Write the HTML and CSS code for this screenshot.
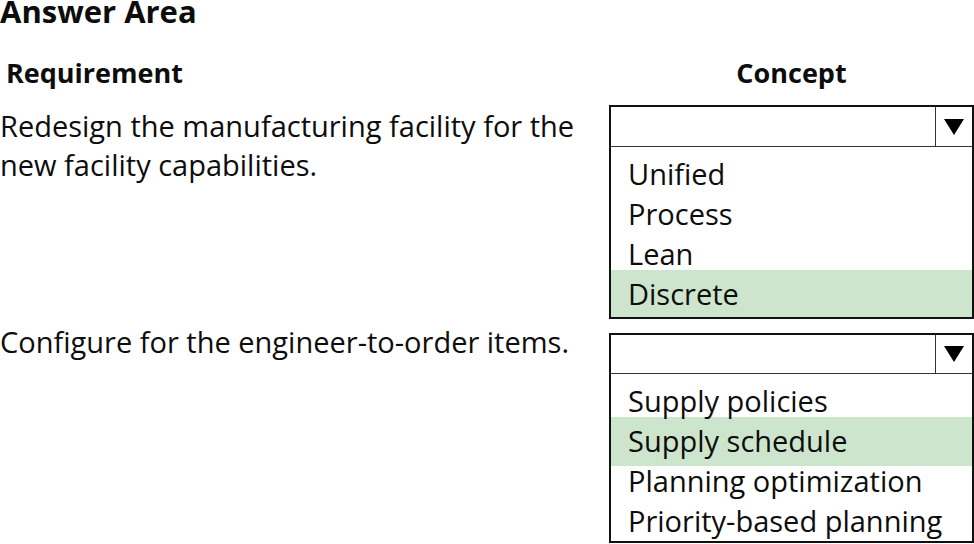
FILE: index.html
```html
<!DOCTYPE html>
<html lang="en">
<head>
<meta charset="utf-8">
<title>Answer Area</title>
<link rel="stylesheet" href="styles.css">
</head>
<body>
<div class="page">
  <h1 class="title">Answer Area</h1>
  <div class="grid">
    <div class="col-head col-head--req">Requirement</div>
    <div class="col-head col-head--concept">Concept</div>

    <div class="req">Redesign the manufacturing facility for the new facility capabilities.</div>
    <div class="dropdown">
      <div class="dd-head">
        <div class="dd-value"></div>
        <div class="dd-arrow"><svg width="20" height="16" viewBox="0 0 20 16"><polygon points="0,0 20,0 10,16" fill="#000"/></svg></div>
      </div>
      <ul class="dd-list">
        <li class="dd-item">Unified</li>
        <li class="dd-item">Process</li>
        <li class="dd-item">Lean</li>
        <li class="dd-item dd-item--selected">Discrete</li>
      </ul>
    </div>

    <div class="req req--second">Configure for the engineer-to-order items.</div>
    <div class="dropdown dropdown--compact">
      <div class="dd-head">
        <div class="dd-value"></div>
        <div class="dd-arrow"><svg width="20" height="16" viewBox="0 0 20 16"><polygon points="0,0 20,0 10,16" fill="#000"/></svg></div>
      </div>
      <ul class="dd-list">
        <li class="dd-item">Supply policies</li>
        <li class="dd-item dd-item--selected">Supply schedule</li>
        <li class="dd-item">Planning optimization</li>
        <li class="dd-item">Priority-based planning</li>
      </ul>
    </div>
  </div>
</div>
</body>
</html>
```

FILE: styles.css
```css
html, body {
  margin: 0;
  padding: 0;
  background: #fff;
}

body {
  font-family: "Open Sans", "Liberation Sans", sans-serif;
  font-variant-ligatures: none;
  color: #0d0d0d;
  width: 974px;
  height: 544px;
  overflow: hidden;
}

.title {
  margin: 0;
  font-size: 31px;
  font-weight: 700;
  line-height: 23px;
  height: 23px;
}

.grid {
  display: grid;
  grid-template-columns: 609px 365px;
  row-gap: 14px;
  margin-top: 30px;
}

.col-head {
  font-size: 27px;
  font-weight: 700;
  line-height: 40px;
  margin-bottom: -2px;
}

.col-head--req {
  padding-left: 6px;
}

.col-head--concept {
  text-align: center;
}

.req {
  font-size: 29px;
  line-height: 39px;
  padding-top: 1px;
  padding-right: 20px;
}

.req--second {
  margin-top: -12px;
}

.dropdown {
  border: 2px solid #111;
  overflow: hidden;
  align-self: start;
}

.dd-head {
  display: flex;
  height: 39px;
  border-bottom: 1px solid #333;
}

.dropdown--compact .dd-head {
  height: 38px;
}

.dd-value {
  flex: 1;
}

.dd-arrow {
  width: 36px;
  border-left: 1px solid #333;
  display: flex;
  align-items: center;
  justify-content: center;
}

.dd-list {
  list-style: none;
  margin: 0;
  padding: 7px 0 3px;
}

.dropdown--compact .dd-list {
  padding-bottom: 0;
}

.dd-item {
  font-size: 29px;
  line-height: 40px;
  padding-left: 17px;
  white-space: nowrap;
}

.dd-item--selected {
  background: #cde5cc;
  padding-top: 4px;
  margin-top: -4px;
  padding-bottom: 5px;
  margin-bottom: -5px;
}
```
